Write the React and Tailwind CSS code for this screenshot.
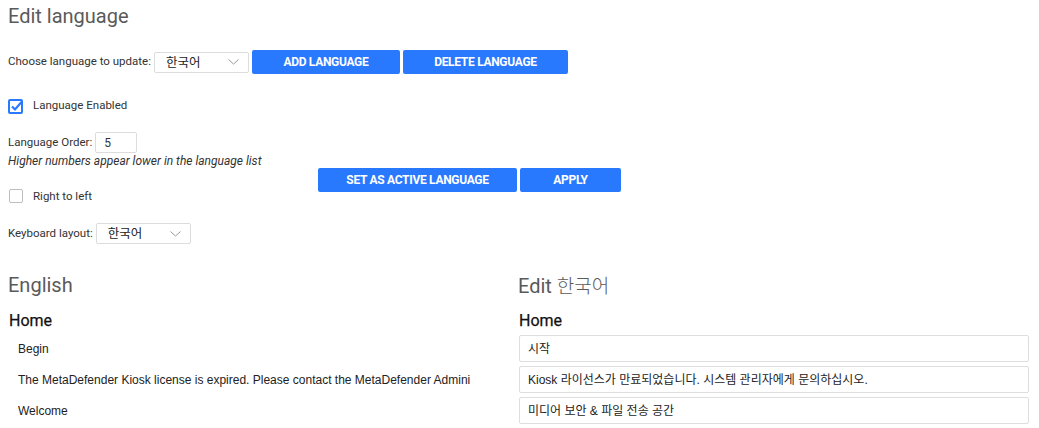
import React from "react";

const btn =
  "h-6 rounded-[2px] bg-[#2979ff] text-white text-[12px] font-bold uppercase flex items-center justify-center tracking-[-0.3px] [font-family:'Liberation_Sans_Narrow','Roboto',sans-serif]";

function Chevron() {
  return (
    <svg width="11" height="6" viewBox="0 0 11 6" className="text-[#9a9a9a]">
      <path d="M0.5 0.5 L5.5 5 L10.5 0.5" fill="none" stroke="currentColor" strokeWidth="1" />
    </svg>
  );
}

function Select({ w, value }) {
  return (
    <div
      className={`h-[21px] ${w} border border-[#dcdcdc] rounded-[2px] bg-white flex items-center justify-between pl-[11px] pr-[9px]`}
    >
      <span className="text-[12.5px] text-[#222] [font-family:'Noto_Sans_CJK_KR',sans-serif] leading-none">
        {value}
      </span>
      <Chevron />
    </div>
  );
}

function CheckedBox() {
  return (
    <svg width="16" height="16" viewBox="0 0 16 16">
      <rect x="1" y="2" width="13" height="13" rx="1" fill="white" stroke="#2979ff" strokeWidth="2" />
      <path d="M4 8.5 L7 11.5 L13.5 4" fill="none" stroke="#2979ff" strokeWidth="2.2" />
    </svg>
  );
}

export default function App() {
  const en = [
    "Begin",
    "The MetaDefender Kiosk license is expired. Please contact the MetaDefender Administrator.",
    "Welcome",
  ];
  const ko = [
    "시작",
    "Kiosk 라이선스가 만료되었습니다. 시스템 관리자에게 문의하십시오.",
    "미디어 보안 & 파일 전송 공간",
  ];
  return (
    <div className="w-[1039px] h-[428px] overflow-hidden bg-white px-2 pt-[2px] text-[#333] [font-family:'Roboto',sans-serif]">
      <div className="text-[20px] leading-[28px] text-[#5a5a5a]">Edit language</div>

      <div className="mt-[20px] h-6 flex items-center">
        <span className="text-[11.5px] mr-[3px]">Choose language to update:</span>
        <Select w="w-[95px]" value="한국어" />
        <div className={`${btn} w-[148px] ml-[3px]`}>Add language</div>
        <div className={`${btn} w-[165px] ml-[3px]`}>Delete language</div>
      </div>

      <div className="mt-[20px] h-6 flex items-center">
        <CheckedBox />
        <span className="text-[11.5px] ml-[9px]">Language Enabled</span>
      </div>

      <div className="mt-[14px] h-[21px] flex items-center">
        <span className="text-[11.5px] mr-[3px]">Language Order:</span>
        <div className="h-[21px] w-[42px] border border-[#dcdcdc] rounded-[2px] flex items-center pl-[8px] text-[12px]">
          5
        </div>
      </div>
      <div className="pt-[1px] text-[12px] italic leading-[15px]">Higher numbers appear lower in the language list</div>

      <div className="-mt-px flex items-start h-[34px]">
        <div className="w-[310px] pt-[21px] flex items-center">
          <div className="ml-px w-[14px] h-[14px] border-[1.5px] border-[#bdbdbd] rounded-[2px]" />
          <span className="text-[11.5px] ml-[10px] leading-[14px]">Right to left</span>
        </div>
        <div className={`${btn} w-[199px]`}>Set as active language</div>
        <div className={`${btn} w-[101px] ml-[3px]`}>Apply</div>
      </div>

      <div className="mt-[21px] h-[21px] flex items-center">
        <span className="text-[11.5px] mr-[3px]">Keyboard layout:</span>
        <Select w="w-[95px]" value="한국어" />
      </div>

      <div className="mt-[27px] grid grid-cols-[510px_511px]">
        <div>
          <div className="h-[28px] text-[20px] leading-[28px] text-[#5a5a5a]">English</div>
          <div className="mt-[10px] h-6 text-[16px] leading-6 font-normal text-[#111] pl-px [-webkit-text-stroke:0.25px_#111]">Home</div>
          <div className="mt-[2px] flex flex-col gap-1">
            {en.map((t) => (
              <div key={t} className="h-[27px] flex items-center pl-[10px]">
                <span className="w-[452px] overflow-hidden whitespace-nowrap text-[12px] text-[#222] [font-family:'Liberation_Sans',sans-serif]">
                  {t}
                </span>
              </div>
            ))}
          </div>
        </div>
        <div>
          <div className="h-[28px] text-[20px] leading-[28px] text-[#5a5a5a] whitespace-nowrap">
            Edit <span className="[font-family:'Noto_Sans_CJK_KR',sans-serif] text-[19px] font-light">한국어</span>
          </div>
          <div className="mt-[10px] h-6 text-[16px] leading-6 font-normal text-[#111] pl-px [-webkit-text-stroke:0.25px_#111]">Home</div>
          <div className="mt-[2px] flex flex-col gap-1 pl-px">
            {ko.map((t) => (
              <div
                key={t}
                className="h-[27px] border border-[#dedede] rounded-[2px] flex items-center pl-[8px] text-[12px] text-[#222] [font-family:'Liberation_Sans','Noto_Sans_CJK_KR',sans-serif]"
              >
                {t}
              </div>
            ))}
          </div>
        </div>
      </div>
    </div>
  );
}
